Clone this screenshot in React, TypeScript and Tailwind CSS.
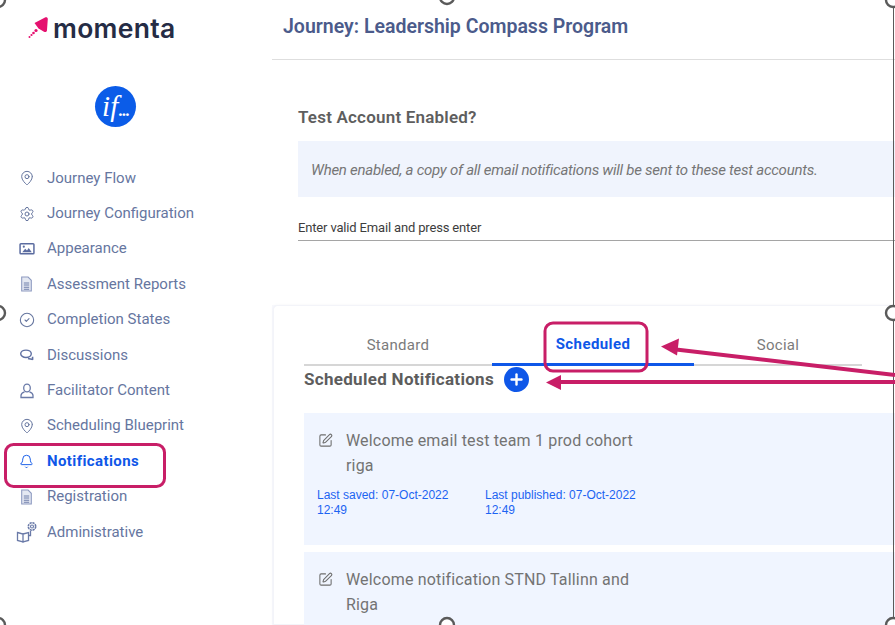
import React from "react";
import { Bell, CircleCheck, Settings, MapPin, SquarePen, Plus } from "lucide-react";

const sans = "font-['Roboto','Liberation_Sans',sans-serif]";

const Pin = () => <MapPin size={16} strokeWidth={1.5} />;
const Doc = () => (
  <svg width="15" height="16" viewBox="0 0 14 15" fill="none">
    <path d="M2.500 1h6l3 3v10h-9z" fill="#e4e8f2" stroke="#8d9ac0" strokeWidth="1" />
    <path d="M4.500 6.500h5M4.500 8.500h5M4.500 10.500h5M4.500 12.500h5" stroke="#6f7eaa" strokeWidth="1" />
  </svg>
);
const Pic = () => (
  <svg width="16" height="14" viewBox="0 0 15 13" fill="none">
    <rect x="1" y="1.500" width="13" height="9.500" rx="0.800" stroke="#5b6ca0" strokeWidth="1.400" />
    <path d="M3 9.500l2.800-3.200 1.700 1.700 1.600-2.400 2.900 3.900z" fill="#5b6ca0" />
    <circle cx="4.500" cy="4.300" r="1" fill="#5b6ca0" />
  </svg>
);
const Chat = () => (
  <svg width="16" height="14" viewBox="0 0 16 14" fill="none">
    <ellipse cx="7" cy="5.800" rx="5.300" ry="3.700" stroke="#5f70a2" strokeWidth="1.400" />
    <path d="M9 10.500c2 .7 4 .5 4.800 1.300-.3-1-.3-1.900-.2-3" stroke="#5f70a2" strokeWidth="1.600" />
  </svg>
);
const User = () => (
  <svg width="16" height="16" viewBox="0 0 16 16" fill="none" stroke="#6a7aa8" strokeWidth="1.300">
    <ellipse cx="8" cy="5" rx="3.300" ry="3.900" />
    <path d="M5.500 8.800C3 9.700 2 10.800 2 12.500V14.500H14V12.500C14 10.800 13 9.700 10.500 8.800" />
  </svg>
);
const Admin = () => (
  <svg width="22" height="23" viewBox="0 0 22 23" fill="none" stroke="#6a7aa8" strokeWidth="1.300">
    <path d="M1.500 11.500l5.500 1.500v8l-5.500-1.500zM7 13l5.500-1.500v8L7 21zM12.500 14.500H14.500V10" />
    <circle cx="16" cy="5.500" r="1.500" strokeWidth="1.100" />
    <circle cx="16" cy="5.500" r="3.700" strokeDasharray="2.200 0.700" strokeWidth="1.600" />
  </svg>
);

const items: { label: string; icon: React.ReactNode; active?: boolean }[] = [
  { label: "Journey Flow", icon: <Pin /> },
  { label: "Journey Configuration", icon: <Settings size={16} strokeWidth={1.500} /> },
  { label: "Appearance", icon: <Pic /> },
  { label: "Assessment Reports", icon: <Doc /> },
  { label: "Completion States", icon: <CircleCheck size={16} strokeWidth={1.600} /> },
  { label: "Discussions", icon: <Chat /> },
  { label: "Facilitator Content", icon: <User /> },
  { label: "Scheduling Blueprint", icon: <Pin /> },
  { label: "Notifications", icon: <Bell size={15} strokeWidth={1.500} />, active: true },
  { label: "Registration", icon: <Doc /> },
  { label: "Administrative", icon: <Admin /> },
];

function Sidebar() {
  return (
    <aside className="w-[272px] shrink-0 bg-white">
      <div className="flex h-[54px] items-center pl-[28px] pt-[2px]">
        <svg width="22" height="24" viewBox="0 0 22 24" className="mr-[3px]">
          <path d="M6.500 7L17 1.500C18.500 1 19.800 1.500 19.800 3L19 14c0 2-1.500 2.500-3 1.800L10.500 12.500z" fill="#e5116f" />
          <circle cx="8" cy="14.500" r="1.600" fill="#e5116f" />
          <circle cx="5.500" cy="17" r="1.300" fill="#e5116f" />
          <circle cx="3.500" cy="19" r="1.100" fill="#e5116f" />
          <circle cx="1.500" cy="21" r="1" fill="#e5116f" />
        </svg>
        <span className="font-['Inter',sans-serif] text-[26.500px] font-semibold leading-none tracking-[0.300px] text-[#252c45]">momenta</span>
      </div>
      <div className="mt-[32px] flex w-[231px] justify-center">
        <div className="flex h-[41px] w-[41px] items-center justify-center rounded-full bg-[#0b5ce8] font-['Liberation_Serif',serif] text-[29px] italic leading-none text-white">
          if<span className="mt-[8px] text-[17px] font-bold not-italic tracking-[-0.700px]">...</span>
        </div>
      </div>
      <nav className={`mt-[33.500px] ${sans}`}>
        {items.map((it) => (
          <div key={it.label} className={`flex h-[35.400px] items-center ${it.active ? "font-bold text-[#0f57e8]" : "text-[#66769f]"}`}>
            <span className="flex w-[47px] shrink-0 justify-center pl-[6px]">
              <span className="flex w-[26px] justify-center">{it.icon}</span>
            </span>
            <span className={`text-[15px] leading-none ${it.active ? "tracking-[0.400px]" : ""}`}>{it.label}</span>
          </div>
        ))}
      </nav>
    </aside>
  );
}

function Card({ title, children, h }: { title: string[]; children?: React.ReactNode; h: string }) {
  return (
    <div className={`bg-[#f0f5ff] pl-[14px] pt-[15px] ${h}`}>
      <div className="flex">
        <SquarePen size={15} strokeWidth={1.700} className="mt-[5px] shrink-0 text-[#6e6e6e]" />
        <div className={`pl-[13px] text-[16px] leading-[25px] tracking-[0.170px] text-[#737373] ${sans}`}>
          {title.map((t) => (
            <div key={t}>{t}</div>
          ))}
        </div>
      </div>
      {children}
    </div>
  );
}

function Main() {
  return (
    <main className={`min-w-0 flex-1 bg-[#f8f9fd] ${sans}`}>
      <div className="flex h-[60px] items-center border-b border-[#dedede] bg-white pb-[6px] pl-[11px] text-[19.500px] font-semibold text-[#4b5b8b]">
        Journey: Leadership Compass Program
      </div>
      <section className="h-[245px] bg-white pl-[26px]">
        <h2 className="pt-[47px] text-[17px] font-semibold leading-[20px] tracking-[0.200px] text-[#5e5e5e]">Test Account Enabled?</h2>
        <div className="mt-[14px] flex h-[56px] items-center bg-[#f0f4fd] pl-[13px] pt-[2px] text-[15px] italic tracking-[-0.260px] text-[#767676]">
          When enabled, a copy of all email notifications will be sent to these test accounts.
        </div>
        <div className="mt-[22px] h-[22px] border-b border-[#a5a5a5] text-[13px] leading-[18px] tracking-[-0.160px] text-[#3d3d3d]">Enter valid Email and press enter</div>
      </section>
      <section className="ml-[1px] h-[320px] rounded-tl-[5px] border border-r-0 border-[#f3f4f9] bg-white pl-[30px] shadow-[0_0_3px_rgba(120,130,170,0.080)]">
        <div className="flex h-[60px] w-[558px] border-b-[2px] border-[#d6d6d6] text-[15px]">
          <div className="flex h-[60px] w-[188px] items-center justify-center pt-[18px] tracking-[0.300px] text-[#7b7b7b]">Standard</div>
          <div className="flex h-[60px] w-[202px] items-center justify-center border-b-[3px] border-[#0f57e8] pt-[20px] font-bold tracking-[0.400px] text-[#0f57e8]">Scheduled</div>
          <div className="flex h-[60px] w-[168px] items-center justify-center pt-[18px] tracking-[0.300px] text-[#7b7b7b]">Social</div>
        </div>
        <div className="flex h-[27px] items-center">
          <span className="text-[17px] font-bold leading-none tracking-[0.300px] text-[#5d5d5d]">Scheduled Notifications</span>
          <span className="ml-[10px] flex h-[25px] w-[25px] items-center justify-center rounded-full bg-[#0f57e8] text-white">
            <Plus size={17} strokeWidth={3.400} />
          </span>
        </div>
        <div className="mt-[20px] flex flex-col gap-[7px]">
          <Card title={["Welcome email test team 1 prod cohort", "riga"]} h="h-[132px]">
            <div className="mt-[10px] -ml-[1px] flex font-['Liberation_Sans',sans-serif] text-[12px] leading-[15px] text-[#1c64f2]">
              <div className="w-[168px]">Last saved: 07-Oct-2022<br />12:49</div>
              <div className="w-[168px]">Last published: 07-Oct-2022<br />12:49</div>
            </div>
          </Card>
          <Card title={["Welcome notification STND Tallinn and", "Riga"]} h="h-[100px]" />
        </div>
      </section>
    </main>
  );
}

const C = "#c81e67";
function Overlay() {
  const handles: [number, number][] = [[-2, 0], [447, -3], [893, 0], [-2, 313], [893, 313], [-2, 625], [447, 625], [893, 625]];
  return (
    <svg className="pointer-events-none absolute inset-0" width="895" height="625" viewBox="0 0 895 625" fill="none">
      <path d="M893.500 0V625" stroke="#5a5a5a" strokeWidth="1" />
      <rect x="5.500" y="444.500" width="159" height="42" rx="8" stroke={C} strokeWidth="3" />
      <rect x="545" y="323" width="102" height="48" rx="8" stroke={C} strokeWidth="3" />
      <path d="M895 375L676 349.500" stroke={C} strokeWidth="4" />
      <path d="M661 346.500l18-8-2 17z" fill={C} />
      <path d="M895 382H560" stroke={C} strokeWidth="4" />
      <path d="M546 382.500l15-7.500v15z" fill={C} />
      {handles.map(([x, y]) => (
        <circle key={`${x}-${y}`} cx={x} cy={y} r="7" fill="white" stroke="#5a5a5a" strokeWidth="2.400" />
      ))}
    </svg>
  );
}

export default function App() {
  return (
    <div className="relative flex h-[625px] w-[895px] overflow-hidden bg-white">
      <Sidebar />
      <Main />
      <Overlay />
    </div>
  );
}
